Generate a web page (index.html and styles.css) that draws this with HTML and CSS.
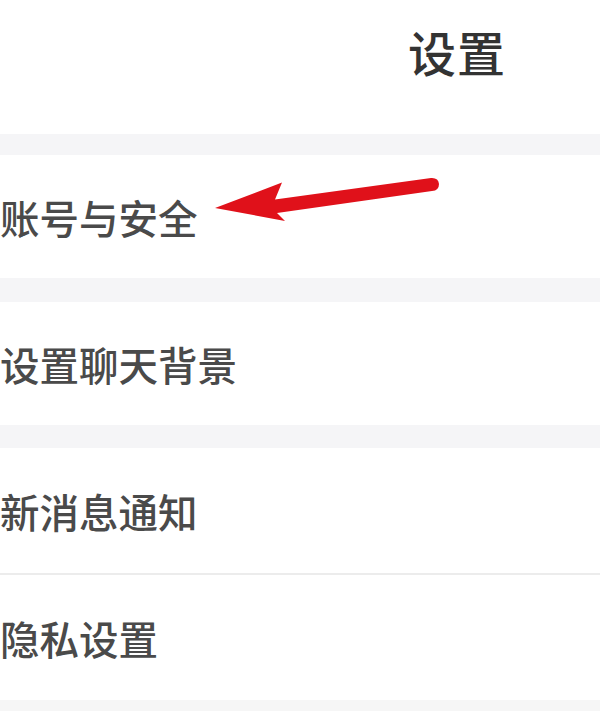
FILE: index.html
```html
<!DOCTYPE html>
<html lang="zh-CN">
<head>
<meta charset="utf-8">
<title>设置</title>
<link rel="stylesheet" href="styles.css">
</head>
<body>
<div class="screen">
  <header class="topbar">
    <h1 class="title">设置</h1>
  </header>
  <div class="gap gap-a"></div>
  <div class="row row-a">
    <span class="label">账号与安全</span>
    <svg class="arrow" width="240" height="60" viewBox="205 170 240 60" aria-hidden="true">
      <path d="M215 208 L282 182.5 L275 199.5 L431 178 Q438.5 177.5 439 184 Q439 190.5 432 191 L277 213 L285 221 Z" fill="#e0111a"/>
    </svg>
  </div>
  <div class="gap gap-b"></div>
  <div class="row row-a"><span class="label">设置聊天背景</span></div>
  <div class="gap gap-c"></div>
  <div class="row row-b"><span class="label">新消息通知</span></div>
  <div class="divider"></div>
  <div class="row row-b"><span class="label">隐私设置</span></div>
  <div class="gap gap-end"></div>
</div>
</body>
</html>
```
FILE: styles.css
```css
html, body {
  margin: 0;
  padding: 0;
  background: #ffffff;
}
.screen {
  width: 600px;
  height: 711px;
  overflow: hidden;
  display: flex;
  flex-direction: column;
  font-family: "Noto Sans CJK SC", "Noto Sans", sans-serif;
  background: #ffffff;
}
.topbar {
  height: 134px;
  flex: none;
  display: flex;
  align-items: center;
  padding-left: 408px;
  box-sizing: border-box;
  background: #ffffff;
}
.title {
  margin: 0 0 32px 0;
  font-size: 48px;
  font-weight: 500;
  color: #333333;
  letter-spacing: 1px;
  line-height: 1;
}
.gap {
  flex: none;
  background: #f5f5f7;
}
.gap-a { height: 21px; }
.gap-b { height: 24px; }
.gap-c { height: 23px; }
.gap-end { flex: 1; background: #f6f6f6; }
.row {
  flex: none;
  display: flex;
  align-items: center;
  position: relative;
  background: #ffffff;
}
.row-a { height: 123px; }
.row-b { height: 125px; }
.divider {
  flex: none;
  height: 2px;
  background: #ececec;
}
.label {
  margin-left: 0;
  font-size: 39.5px;
  font-weight: 500;
  color: #4a4a4a;
  line-height: 1;
}
.arrow {
  position: absolute;
  left: 205px;
  top: 15px;
}
```
